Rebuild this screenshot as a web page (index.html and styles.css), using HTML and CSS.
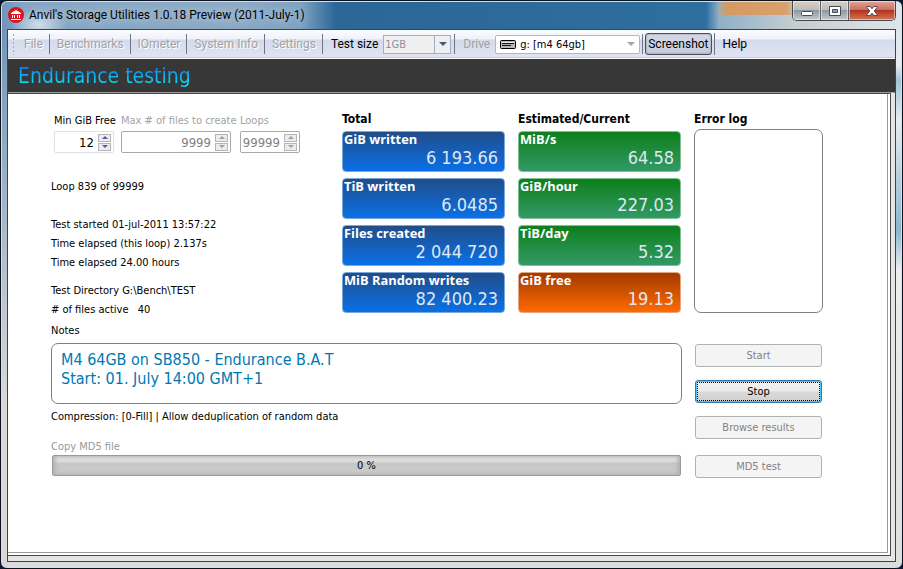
FILE: index.html
```
<!DOCTYPE html>
<html lang="en">
<head>
    <meta charset="UTF-8">
    <meta name="viewport" content="width=device-width, initial-scale=1.0">
    <title>Anvil's Storage Utilities</title>
    <link rel="stylesheet" href="styles.css">
</head>
<body>
    <div class="window">
        <header class="titlebar">
            <svg class="logo" viewBox="0 0 16 16" width="16" height="16">
                <circle cx="8" cy="8" r="8" fill="#d9151d"/>
                <path d="M3 6 8 3l5 3v1H3zM4 8h1v3H4zM6 8h1v3H6zM9 8h1v3H9zM11 8h1v3h-1zM3 12h10v1H3z" fill="#fff"/>
            </svg>
            <span class="title">Anvil's Storage Utilities 1.0.18 Preview (2011-July-1)</span>
            <div class="window-buttons">
                <button class="win-btn" aria-label="Minimize">
                    <svg viewBox="0 0 14 12" width="14" height="12"><rect x="1.500" y="6.500" width="11" height="4" rx="1" fill="#fff" stroke="#454b59"/></svg>
                </button>
                <button class="win-btn" aria-label="Maximize">
                    <svg viewBox="0 0 14 12" width="14" height="12"><path d="M1.500 1.500h11v9h-11zM4.500 4.500v3h5v-3z" fill="#fff" fill-rule="evenodd" stroke="#454b59"/></svg>
                </button>
                <button class="win-btn close" aria-label="Close">
                    <svg viewBox="0 0 14 12" width="14" height="12"><path d="M2 1.500h3l2 2.200 2-2.200h3v1.200L9.200 6l2.800 3.300v1.200H9L7 8.300 5 10.500H2V9.300L4.800 6 2 2.700z" fill="#fff" stroke="#53454c"/></svg>
                </button>
            </div>
        </header>

        <main class="client">
            <nav class="toolbar">
                <span class="grip"></span>
                <button class="tool" disabled>File</button>
                <button class="tool" disabled>Benchmarks</button>
                <button class="tool" disabled>IOmeter</button>
                <button class="tool" disabled>System Info</button>
                <button class="tool" disabled>Settings</button>
                <div class="tool-field size">
                    <label for="testSize">Test size</label>
                    <div class="select size-select">
                        <select id="testSize" disabled><option>1GB</option></select>
                        <span class="drop"></span>
                    </div>
                </div>
                <div class="tool-field drive">
                    <label class="off" for="drive">Drive</label>
                    <div class="select drive-select">
                        <svg viewBox="0 0 16 9" width="16" height="9">
                            <rect x=".5" y=".5" width="15" height="8" rx="1" fill="#b8b8b8" stroke="#000"/>
                            <path d="M2 3.500h12M2 5.500h9" stroke="#111"/>
                            <path d="M2 2.500h12" stroke="#eee"/>
                        </svg>
                        <select id="drive"><option>g: [m4 64gb]</option></select>
                        <span class="drop"></span>
                    </div>
                </div>
                <div class="tool-shot"><button class="shot">Screenshot</button></div>
                <button class="tool help">Help</button>
            </nav>

            <h1 class="heading"><span>Endurance testing</span></h1>

            <section class="content">
                <div class="top">
                    <div class="info">
                        <div class="fields">
                            <div class="field min">
                                <label for="minFree">Min GiB Free</label>
                                <div class="spin">
                                    <input id="minFree" type="text" value="12">
                                    <span class="arrows"><button class="up" aria-label="More"></button><button class="down" aria-label="Less"></button></span>
                                </div>
                            </div>
                            <div class="field max off">
                                <label for="maxFiles">Max # of files to create</label>
                                <div class="spin">
                                    <input id="maxFiles" type="text" value="9999" disabled>
                                    <span class="arrows"><button class="up" aria-label="More" disabled></button><button class="down" aria-label="Less" disabled></button></span>
                                </div>
                            </div>
                            <div class="field loops off">
                                <label for="loops">Loops</label>
                                <div class="spin">
                                    <input id="loops" type="text" value="99999" disabled>
                                    <span class="arrows"><button class="up" aria-label="More" disabled></button><button class="down" aria-label="Less" disabled></button></span>
                                </div>
                            </div>
                        </div>
                        <p class="loop">Loop 839 of 99999</p>
                        <div class="lines">
                            <p>Test started 01-jul-2011 13:57:22</p>
                            <p>Time elapsed (this loop) 2.137s</p>
                            <p>Time elapsed 24.00 hours</p>
                        </div>
                        <div class="lines last">
                            <p>Test Directory G:\Bench\TEST</p>
                            <p># of files active <span class="count">40</span></p>
                        </div>
                    </div>

                    <div class="stats">
                        <h2>Total</h2>
                        <div class="card blue"><h3>GiB written</h3><p>6 193.66</p></div>
                        <div class="card blue"><h3>TiB written</h3><p>6.0485</p></div>
                        <div class="card blue"><h3>Files created</h3><p>2 044 720</p></div>
                        <div class="card blue"><h3>MiB Random writes</h3><p>82 400.23</p></div>
                    </div>

                    <div class="stats">
                        <h2>Estimated/Current</h2>
                        <div class="card green"><h3>MiB/s</h3><p>64.58</p></div>
                        <div class="card green"><h3>GiB/hour</h3><p>227.03</p></div>
                        <div class="card green"><h3>TiB/day</h3><p>5.32</p></div>
                        <div class="card orange"><h3>GiB free</h3><p>19.13</p></div>
                    </div>

                    <div class="errors">
                        <h2><label for="errorLog">Error log</label></h2>
                        <textarea id="errorLog" readonly></textarea>
                    </div>
                </div>

                <div class="bottom">
                    <div class="notes">
                        <label for="notes">Notes</label>
                        <textarea id="notes">M4 64GB on SB850 - Endurance B.A.T
Start: 01. July 14:00 GMT+1</textarea>
                        <p class="compression">Compression: [0-Fill] | Allow deduplication of random data</p>
                        <p class="copy">Copy MD5 file</p>
                        <div class="progress" role="progressbar" aria-label="Copy MD5 file" aria-valuenow="0">0 %</div>
                    </div>
                    <div class="actions">
                        <button class="btn" disabled>Start</button>
                        <button class="btn active">Stop</button>
                        <button class="btn" disabled>Browse results</button>
                        <button class="btn md5" disabled>MD5 test</button>
                    </div>
                </div>
            </section>
        </main>
    </div>
</body>
</html>
```

FILE: styles.css
```
* {
    box-sizing: border-box;
}
body {
    margin: 0;
    background-color: #0a1b33;
    color: #000;
    font-family: 'DejaVu Sans Condensed', 'DejaVu Sans', sans-serif;
    font-stretch: condensed;
    font-size: 11px;
}
h1, h2, h3, p {
    margin: 0;
    font-weight: normal;
}
button, input, select, textarea {
    font: inherit;
    color: inherit;
    margin: 0;
    padding: 0;
    border: 0;
    background: none;
    outline: none;
}

/* window frame */
.window {
    display: flex;
    flex-direction: column;
    min-height: 100vh;
    padding: 0 6px 6px;
    border: 1px solid #0b1220;
    border-radius: 7px;
    box-shadow: inset 0 0 0 1px #d3e0ea;
    background:
        radial-gradient(ellipse 28px 16px at 38px 24px, #d3dfe8, transparent) 0 0 / 100% 29px no-repeat,
        linear-gradient(to right, transparent 716px, #d59a62 726px, #d8a06c 785px, transparent 796px) 0 0 / 100% 14px no-repeat,
        linear-gradient(to bottom, transparent 29px, #d9d8d7 400px) 0 0 / 8px 100% no-repeat,
        linear-gradient(to bottom, #dfe6ea 0, #e9edf0 35px, #9fc4d8 50px, #e9edf0 90px, #8ab4cd 200px, #eee 240px, #ddd) 100% 29px / 9px 100% no-repeat,
        linear-gradient(#dcdcdc, #dcdcdc) 0 100% / 100% 9px no-repeat,
        linear-gradient(to right, #6f94b8 0, #84a5c4 22px, #8daac5 230px, #7ea2c2 300px, #2b6697 335px, #2e6fa0 705px, #8fb0c5 718px, #c3ccd1 790px, #dfe6ea);
}
.titlebar {
    display: flex;
    align-items: center;
    height: 28px;
    padding: 0 0 0 1px;
}
.title {
    flex: 1;
    margin-left: 5px;
    font-family: Roboto, 'Noto Sans', sans-serif;
    font-size: 12px;
    font-stretch: normal;
    text-shadow: 0 0 8px #d5e2ed;
}
.window-buttons {
    display: flex;
    align-self: flex-start;
    border: 1px solid #43494f;
    border-top: 0;
    border-radius: 0 0 5px 5px;
    overflow: hidden;
}
.win-btn {
    display: flex;
    align-items: center;
    justify-content: center;
    width: 28px;
    height: 19px;
    border-right: 1px solid #59626c;
    background: linear-gradient(#d9cfc6 0, #bdbcbb 45%, #8e989f 50%, #c4ccd0);
    box-shadow: inset 0 0 0 1px rgba(255, 255, 255, 0.5);
}
.win-btn.close {
    width: 46px;
    border-right: 0;
    background: linear-gradient(#dfa69c 0, #cb705f 45%, #b03420 50%, #d57752);
}

/* client area */
.client {
    display: flex;
    flex: 1;
    flex-direction: column;
    border: 1px solid #3e4348;
    background-color: #e5e5e5;
    padding-bottom: 5px;
}
.toolbar {
    display: flex;
    align-items: center;
    height: 29px;
    border-bottom: 1px solid #fff;
    background: linear-gradient(#fcfcfe 0, #f0f2fa 9px, #d4daec 10px, #e0e4f4 27px, #a9afbd 28px);
    font-family: Roboto, 'Noto Sans', sans-serif;
    font-stretch: normal;
    font-size: 12px;
}
.grip {
    width: 3px;
    height: 22px;
    margin: 0 2px 0 4px;
    background: radial-gradient(circle, #a9aebd 1px, transparent 1px) 0 0 / 3px 4px;
}
.tool {
    height: 20px;
    padding: 0 6px 0 7px;
    border-right: 1px solid #6e7482;
}
.tool:disabled,
.off {
    color: #a3a3a3;
}
.tool:disabled {
    text-shadow: 1px 1px 0 #fff;
}
.tool.help {
    padding: 0 8px;
    border: 0;
}
.tool-field {
    display: flex;
    align-items: center;
    gap: 5px;
    height: 20px;
    padding: 0 3px 0 8px;
    border-right: 1px solid #6e7482;
}
.select {
    display: flex;
    align-items: center;
    height: 19px;
    border: 1px solid #a0afc3;
}
.select select {
    flex: 1;
    min-width: 0;
    appearance: none;
    font-family: 'DejaVu Sans Condensed', sans-serif;
    font-stretch: condensed;
    font-size: 11px;
}
.size-select {
    width: 68px;
    background-color: #efefef;
}
.size-select select {
    padding-left: 1px;
    color: #8b929b;
    opacity: 1;
}
.drop {
    display: flex;
    align-items: center;
    justify-content: center;
    width: 16px;
    height: 17px;
}
.drop::before {
    content: '';
    border: 4px solid transparent;
    border-top-color: #a5a5a5;
    border-bottom: 0;
}
.size-select .drop {
    border-left: 1px solid #a0afc3;
}
.size-select .drop::before {
    border-top-color: #46577c;
}
.drive-select {
    width: 145px;
    gap: 4px;
    padding-left: 4px;
    border: 1px solid #b4b7be;
    border-radius: 2px;
    background-color: #fff;
}
.tool-field.drive {
    padding-right: 2px;
}
.tool-shot {
    padding: 0 2px;
    border-right: 1px solid #6e7482;
}
.shot {
    height: 22px;
    padding: 0 2px;
    border: 1px solid #4b4f5c;
    border-radius: 3px;
    background: linear-gradient(#d5d9e5, #c5cbdc);
    box-shadow: inset 0 0 2px #777d8d;
}
.heading {
    height: 34px;
    padding: 0 10px;
    border-bottom: 1px solid #9a9a9a;
    background-color: #373737;
    font-size: 21px;
    line-height: 34px;
}
.heading span {
    background: linear-gradient(#0c80f0 3px, #0cdcf4 20px);
    background-clip: text;
    color: transparent;
}

/* page content */
.content {
    flex: 1;
    margin-right: 4px;
    padding: 17px 67px 20px 43px;
    border: 1px solid #4a4a4a;
    border-left: 0;
    background-color: #fff;
    box-shadow: inset -2px -2px 0 #fff, inset -3px -3px 0 #9a9a9a;
}
.top {
    display: flex;
    gap: 13px;
}
.info {
    flex: 1;
}
.fields {
    display: flex;
    gap: 7px;
    padding: 3px 0 0 3px;
}
.field {
    white-space: nowrap;
}
.field label {
    display: block;
    height: 17px;
    line-height: 14px;
}
.min {
    width: 60px;
}
.max {
    width: 112px;
}
.loops {
    width: 60px;
}
.spin {
    display: flex;
    align-items: center;
    height: 22px;
    padding-right: 2px;
    border: 1px solid #a8a8a8;
    border-radius: 2px;
}
.min .spin {
    border-color: #dfdfe6;
}
.max .spin {
    width: 110px;
}
.spin input {
    flex: 1;
    min-width: 0;
    padding-right: 4px;
    font-size: 13px;
    text-align: right;
}
.spin input:disabled {
    color: #808080;
}
.arrows {
    display: flex;
    flex-direction: column;
    gap: 1px;
}
.up,
.down {
    display: flex;
    align-items: center;
    justify-content: center;
    width: 13px;
    height: 8px;
    border: 1px solid #b5b5b5;
    background-color: #ececec;
}
.up::before,
.down::before {
    content: '';
    border: 3px solid transparent;
}
.up::before {
    border-top: 0;
    border-bottom-color: #4a5cae;
}
.down::before {
    border-bottom: 0;
    border-top-color: #4a5cae;
}
.up:disabled::before {
    border-bottom-color: #a0a0a0;
}
.down:disabled::before {
    border-top-color: #a0a0a0;
}
.loop {
    margin: 24px 0 19px;
    line-height: 19px;
}
.lines {
    margin-bottom: 9px;
    line-height: 19px;
}
.lines.last {
    margin-bottom: 0;
}
.count {
    margin-left: 6px;
}
.stats {
    display: flex;
    flex-direction: column;
    gap: 6px;
    width: 163px;
}
h2 {
    height: 14px;
    font-size: 12px;
    font-weight: bold;
    line-height: 16px;
    white-space: nowrap;
}
.card {
    height: 41px;
    border: 1px solid;
    border-radius: 4px;
    color: #fff;
}
.card h3 {
    padding-left: 1px;
    font-family: 'Open Sans', 'Noto Sans', sans-serif;
    font-stretch: normal;
    font-weight: bold;
    line-height: 14px;
}
.card p {
    padding-right: 6px;
    color: #dfe8f2;
    font-size: 18px;
    line-height: 24px;
    text-align: right;
}
.blue {
    border-color: #79a6dc;
    background: linear-gradient(#214d88, #0a70e8);
}
.green {
    border-color: #7fc191;
    background: linear-gradient(#0d7f1b, #339966);
}
.orange {
    border-color: #e3a77f;
    background: linear-gradient(#a33a00, #ff6a00);
}
.errors {
    display: flex;
    flex-direction: column;
    gap: 4px;
    width: 129px;
}
.errors textarea {
    height: 184px;
    border: 1px solid #808080;
    border-radius: 7px;
    resize: none;
}
.bottom {
    display: flex;
    gap: 12px;
    margin-top: 5px;
}
.notes {
    flex: 1;
}
.notes label {
    display: block;
    height: 19px;
    line-height: 14px;
}
.notes textarea {
    display: block;
    width: 100%;
    height: 61px;
    padding: 6px 9px;
    border: 1px solid #808080;
    border-radius: 7px;
    color: #0078b4;
    font-size: 16px;
    line-height: 19px;
    resize: none;
}
.compression {
    margin-top: 3px;
    line-height: 19px;
}
.copy {
    margin-top: 11px;
    color: #999;
    line-height: 19px;
}
.progress {
    height: 21px;
    margin: -1px 1px 0;
    border: 1px solid #9a9a9a;
    border-radius: 2px;
    background: linear-gradient(#ededed 0, #d9d9d9 6px, #c6c6c6 7px, #cecece);
    box-shadow: inset 2px 0 4px #b0b0b0, inset -2px 0 4px #b0b0b0;
    line-height: 19px;
    text-align: center;
}
.actions {
    display: flex;
    flex-direction: column;
    gap: 13px;
    width: 129px;
    padding: 20px 1px 0;
}
.btn {
    height: 23px;
    border: 1px solid #adb2b5;
    border-radius: 3px;
    background-color: #f4f4f4;
}
.btn:disabled {
    color: #838383;
}
.btn.active {
    border-color: #2c7db5;
    background: linear-gradient(#f2f2f2 0, #ebebeb 48%, #dadada 52%, #cfcfcf);
    box-shadow: inset 0 0 0 1px #45c8f0;
    outline: 1px dotted #000;
    outline-offset: -3px;
}
.btn.md5 {
    margin-top: 3px;
}
```
